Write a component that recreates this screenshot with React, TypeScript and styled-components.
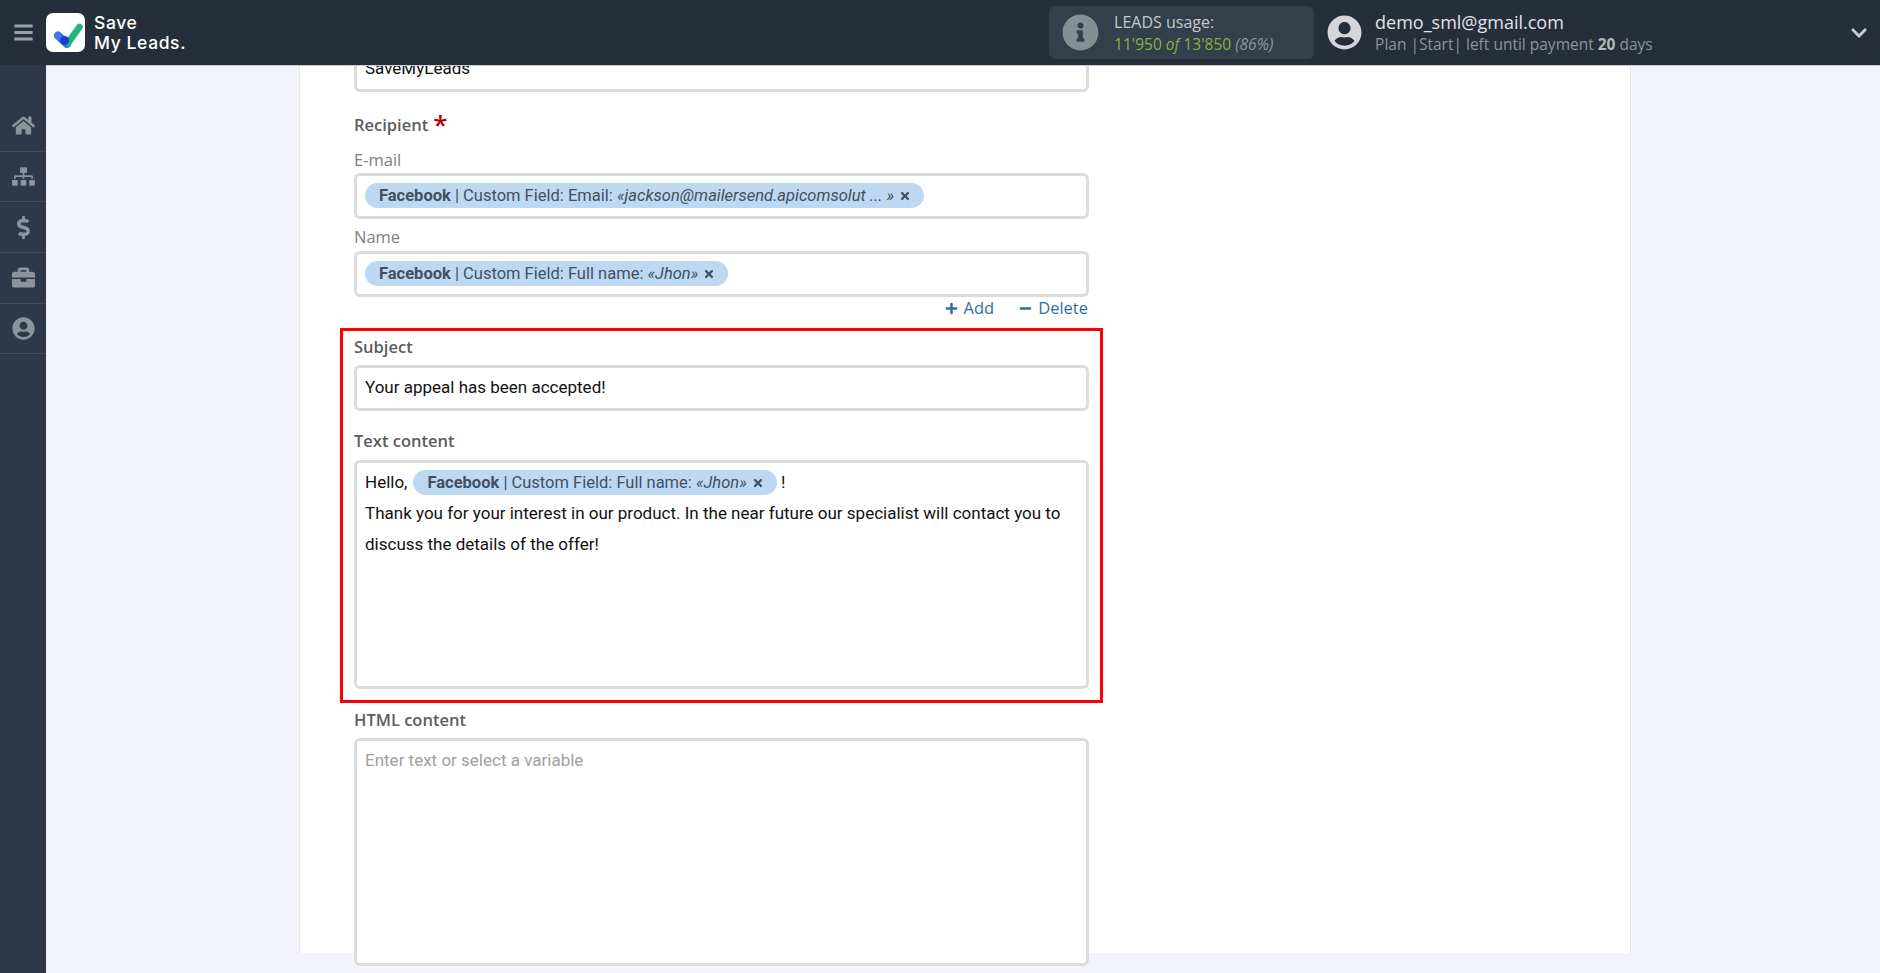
import React, { FC } from 'react';
import styled, { createGlobalStyle } from 'styled-components';
import {
  FaBars,
  FaBriefcase,
  FaChevronDown,
  FaDollarSign,
  FaHome,
  FaInfoCircle,
  FaMinus,
  FaPlus,
  FaSitemap,
  FaTimes,
  FaUserCircle,
} from 'react-icons/fa';

const GlobalStyle = createGlobalStyle`
  html, body {
    margin: 0;
    height: 100%;
    overflow: hidden;
    background: #f2f3fb;
  }
  * {
    box-sizing: border-box;
  }
`;

const Page = styled.div`
  width: 1880px;
  height: 973px;
  display: flex;
  flex-direction: column;
  overflow: hidden;
  font-family: 'Open Sans', sans-serif;
`;

const Header = styled.header`
  flex: 0 0 65px;
  display: flex;
  align-items: center;
  background: #272e3b;
  position: relative;
  z-index: 2;
`;

const MenuButton = styled.div`
  width: 46px;
  display: flex;
  justify-content: center;
  color: #9ba1a9;
  font-size: 21px;
  line-height: 0;
`;

const LogoTile = styled.div`
  width: 39px;
  height: 39px;
  border-radius: 7px;
  background: #fff;
  line-height: 0;
`;

const LogoText = styled.div`
  margin-left: 9px;
  font-family: Inter, sans-serif;
  font-weight: 500;
  font-size: 17.5px;
  line-height: 19.5px;
  letter-spacing: 0.6px;
  color: #fff;
`;

const UsageBox = styled.div`
  margin-left: 863px;
  width: 265px;
  height: 53px;
  display: flex;
  align-items: center;
  padding-left: 13px;
  gap: 15px;
  border-radius: 6px;
  background: #333f4a;
`;

const UsageIcon = styled.div`
  color: #868e96;
  font-size: 37px;
  line-height: 0;
`;

const UsageTitle = styled.div`
  font-size: 16px;
  line-height: 22px;
  color: #c5c9ce;
`;

const UsageCount = styled.div`
  font-size: 15.5px;
  line-height: 22px;
  color: #86b24a;
  em {
    font-style: italic;
  }
  span {
    font-style: italic;
    color: #8f979f;
  }
`;

const UserIcon = styled.div`
  margin-left: 13px;
  color: #d5d6d8;
  font-size: 35px;
  line-height: 0;
`;

const UserInfo = styled.div`
  margin-left: 13px;
  flex: 1;
`;

const UserMail = styled.div`
  font-size: 18px;
  line-height: 23px;
  color: #e1e3e6;
`;

const UserPlan = styled.div`
  font-size: 15.5px;
  line-height: 21px;
  color: #8d949d;
  b {
    font-weight: 700;
    color: #b4b9bf;
  }
`;

const Caret = styled.div`
  margin-right: 12px;
  color: #c9cbce;
  font-size: 18px;
  line-height: 0;
`;

const Body = styled.div`
  flex: 1;
  display: flex;
  min-height: 0;
`;

const Sidebar = styled.nav`
  flex: 0 0 46px;
  padding-top: 36px;
  background: #2d3848;
`;

const NavItem = styled.div`
  height: 50.7px;
  display: flex;
  align-items: center;
  justify-content: center;
  border-bottom: 1px solid #3f4a5a;
  color: #8c939d;
  font-size: 23px;
`;

const Main = styled.main`
  flex: 1;
  min-width: 0;
  padding: 0 249px 0 253px;
  overflow: hidden;
  border-top: 1px solid #c7ccd8;
`;

const Panel = styled.section`
  height: 100%;
  padding-left: 54px;
  background: #fff;
  border: solid #e6e7ee;
  border-width: 0 1px;
`;

const Form = styled.div`
  width: 735px;
  margin-top: -20px;
`;

const Input = styled.div<{ $tall?: boolean; $height?: number }>`
  min-height: 46px;
  height: ${p => (p.$height ? `${p.$height}px` : '46px')};
  display: block;
  padding: 4px 8px;
  border: 3px solid #dcdcdc;
  border-radius: 6px;
  background: #fff;
  font-family: Roboto, sans-serif;
  font-size: 17px;
  line-height: 31px;
  color: #111;
`;

const Title = styled.div<{ $top: number; $bottom: number }>`
  margin: ${p => p.$top}px 0 ${p => p.$bottom}px;
  font-size: 16.5px;
  font-weight: 600;
  line-height: 20px;
  color: #5d5d5d;
`;

const Required = styled.span`
  margin-left: 5px;
  font-size: 26px;
  line-height: 0;
  color: #b30000;
  position: relative;
  top: 3px;
`;

const SubTitle = styled.div<{ $top: number; $bottom: number }>`
  margin: ${p => p.$top}px 0 ${p => p.$bottom}px;
  font-size: 16.5px;
  line-height: 20px;
  color: #808080;
`;

const ChipBox = styled.span<{ $left?: number }>`
  display: inline-flex;
  align-items: center;
  height: 25px;
  margin-left: ${p => p.$left ?? 0}px;
  padding: 0 13px 0 14px;
  border-radius: 13px;
  background: #bdd8f3;
  font-size: 16.5px;
  line-height: 25px;
  white-space: pre;
  color: #44505f;
  vertical-align: top;
  margin-top: 3px;
  b {
    font-weight: 700;
  }
  i {
    font-style: italic;
  }
  svg {
    margin-left: 5px;
    font-size: 12px;
  }
`;

const Actions = styled.div`
  height: 20px;
  margin-top: 1px;
  display: flex;
  justify-content: flex-end;
  gap: 25px;
  padding-right: 1px;
`;

const ActionLink = styled.span`
  display: inline-flex;
  align-items: center;
  gap: 6px;
  font-size: 16.5px;
  line-height: 20px;
  color: #2f6ea5;
  svg {
    font-size: 13px;
  }
`;

const Highlight = styled.div`
  margin: 10px -14px 0;
  padding: 6px 11px 11px;
  border: 3px solid #ff0000;
`;

const Placeholder = styled.span`
  color: #a0a0a0;
`;

type ChipProps = {
  field: string,
  value: string,
  left?: number
};

const Chip: FC<ChipProps> = ({ field, value, left }) => (
  <ChipBox $left={left}>
    <b>Facebook</b> | Custom Field: {field}: <i>«{value}»</i>
    <FaTimes />
  </ChipBox>
);

const App: FC = () => (
  <Page>
    <GlobalStyle />
    <Header>
      <MenuButton><FaBars /></MenuButton>
      <LogoTile>
        <svg width="39" height="39" viewBox="0 0 39 39">
          <path d="M12 22.5 L21 31" stroke="#3f73ee" strokeWidth="8" strokeLinecap="round" />
          <path d="M22 30 L33.5 14" stroke="#21b67c" strokeWidth="6.5" strokeLinecap="round" />
          <circle cx="18.5" cy="27.5" r="4.6" fill="#1d3fcb" />
        </svg>
      </LogoTile>
      <LogoText>Save<br />My Leads.</LogoText>
      <UsageBox>
        <UsageIcon><FaInfoCircle /></UsageIcon>
        <div>
          <UsageTitle>LEADS usage:</UsageTitle>
          <UsageCount>11'950 <em>of</em> 13'850 <span>(86%)</span></UsageCount>
        </div>
      </UsageBox>
      <UserIcon><FaUserCircle /></UserIcon>
      <UserInfo>
        <UserMail>demo_sml@gmail.com</UserMail>
        <UserPlan>Plan |Start| left until payment <b>20</b> days</UserPlan>
      </UserInfo>
      <Caret><FaChevronDown /></Caret>
    </Header>
    <Body>
      <Sidebar>
        <NavItem><FaHome /></NavItem>
        <NavItem><FaSitemap /></NavItem>
        <NavItem><FaDollarSign /></NavItem>
        <NavItem><FaBriefcase /></NavItem>
        <NavItem><FaUserCircle /></NavItem>
      </Sidebar>
      <Main>
        <Panel>
          <Form>
            <Input>SaveMyLeads</Input>
            <Title $top={23} $bottom={0}>Recipient<Required>*</Required></Title>
            <SubTitle $top={15} $bottom={3}>E-mail</SubTitle>
            <Input>
              <Chip field="Email" value="jackson@mailersend.apicomsolut ... " />
            </Input>
            <SubTitle $top={8} $bottom={4}>Name</SubTitle>
            <Input>
              <Chip field="Full name" value="Jhon" />
            </Input>
            <Actions>
              <ActionLink><FaPlus />Add</ActionLink>
              <ActionLink><FaMinus />Delete</ActionLink>
            </Actions>
            <Highlight>
              <Title $top={0} $bottom={8}>Subject</Title>
              <Input>Your appeal has been accepted!</Input>
              <Title $top={20} $bottom={9}>Text content</Title>
              <Input $height={229}>
                Hello,
                <Chip field="Full name" value="Jhon" left={6} /> !
                <br />
                Thank you for your interest in our product. In the near future our specialist will contact you to discuss the details of the offer!
              </Input>
            </Highlight>
            <Title $top={7} $bottom={8}>HTML content</Title>
            <Input $height={228}>
              <Placeholder>Enter text or select a variable</Placeholder>
            </Input>
          </Form>
        </Panel>
      </Main>
    </Body>
  </Page>
);

export default App;
